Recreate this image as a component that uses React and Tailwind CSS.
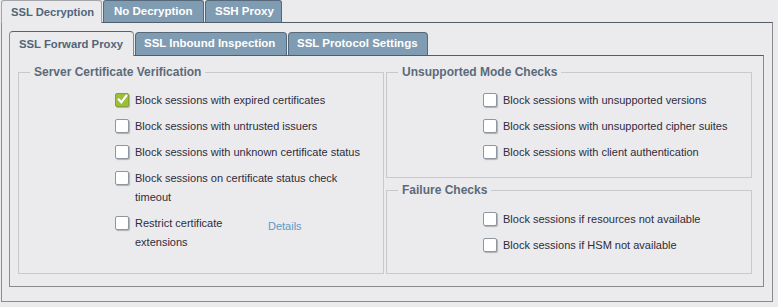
import React from "react";

function Box({ checked }) {
  return (
    <span
      className={
        "mt-[1.5px] flex h-[14px] w-[14px] shrink-0 items-center justify-center rounded-[2px] border shadow-[1px_1px_1px_rgba(0,0,0,0.25)] " +
        (checked ? "border-[#86a233] bg-[#9cbe3a]" : "border-[#8e969e] bg-white")
      }
    >
      {checked && (
        <svg width="11" height="11" viewBox="0 0 11 11">
          <path d="M1.8 5.6 L4.3 8.3 L9.3 1.8" fill="none" stroke="white" strokeWidth="2.2" strokeLinecap="square" />
        </svg>
      )}
    </span>
  );
}

function Row({ checked, children, w = "w-[235px]", extra }) {
  return (
    <div className="flex items-start">
      <Box checked={checked} />
      <span className={"ml-[6px] leading-[19px] " + w}>{children}</span>
      {extra}
    </div>
  );
}

function Group({ title, children, className = "" }) {
  return (
    <fieldset className={"border border-[#c9c9cb] " + className}>
      <legend className="ml-[11px] px-[4px] text-[12px] font-bold leading-[16px] text-[#5b6a79]">{title}</legend>
      <div className="flex flex-col gap-[7px] pl-[96px]">{children}</div>
    </fieldset>
  );
}

export default function App() {
  return (
    <div className="h-[307px] w-[778px] bg-[#ebebed] pl-px text-[11px] text-[#2e2b3c] [font-family:'Liberation_Sans',Arial,sans-serif]">
      {/* top tabs */}
      <div className="flex h-[22px] items-end gap-px">
        <div className="relative z-10 -mb-px flex h-[23px] w-[101px] items-center rounded-t-[3px] border border-b-0 border-[#a2a4a7] bg-[#ebebed] pl-[9px] text-[11.2px] font-bold text-[#50657a]">
          SSL Decryption
        </div>
        <div className="flex h-[22px] w-[101px] items-center rounded-t-[3px] border border-b-0 border-[#56697a] bg-[#7f9cb2] pl-[10px] text-[11.5px] font-bold text-white">
          No Decryption
        </div>
        <div className="flex h-[22px] w-[77px] items-center rounded-t-[3px] border border-b-0 border-[#56697a] bg-[#7f9cb2] pl-[9px] text-[11.5px] font-bold text-white">
          SSH Proxy
        </div>
      </div>
      {/* outer panel */}
      <div className="w-[772px] border border-[#8b8b8d] border-t-[#4f5e6c] pb-[14px] pl-[7px] pr-[8px] pt-[8px]">
        <div className="flex h-[24px] items-end gap-px">
          <div className="relative z-10 -mb-px flex h-[25px] w-[125px] items-center rounded-t-[4px] border border-b-0 border-[#8b8b8d] border-t-[#55636f] bg-[#ebebed] pl-[9px] text-[11.3px] font-bold text-[#50657a]">
            SSL Forward Proxy
          </div>
          <div className="flex h-[23px] w-[152px] items-center rounded-t-[4px] border border-b-0 border-[#56697a] bg-[#7f9cb2] pl-[8px] text-[11.5px] font-bold text-white">
            SSL Inbound Inspection
          </div>
          <div className="flex h-[23px] w-[140px] items-center rounded-t-[4px] border border-b-0 border-[#56697a] bg-[#7f9cb2] pl-[8px] text-[11.5px] font-bold text-white">
            SSL Protocol Settings
          </div>
        </div>
        <div className="w-[755px] border border-[#8b8b8d] border-t-[#4f5e6c] pb-[12px] pl-[8px] pr-[11px] pt-[8px]">
          <div className="grid grid-cols-[366px_366px] gap-[2px]">
            <Group title="Server Certificate Verification" className="pb-[21px] pt-[11px]">
              <Row checked>Block sessions with expired certificates</Row>
              <Row>Block sessions with untrusted issuers</Row>
              <Row>Block sessions with unknown certificate status</Row>
              <Row>Block sessions on certificate status check timeout</Row>
              <Row
                w="w-[120px]"
                extra={<span className="ml-[13px] mt-[3px] leading-[19px] text-[#5a9ac6]">Details</span>}
              >
                Restrict certificate extensions
              </Row>
            </Group>
            <div className="flex flex-col gap-[4px]">
              <Group title="Unsupported Mode Checks" className="pb-[15px] pt-[11px]">
                <Row w="w-[240px]">Block sessions with unsupported versions</Row>
                <Row w="w-[240px]">Block sessions with unsupported cipher suites</Row>
                <Row w="w-[240px]">Block sessions with client authentication</Row>
              </Group>
              <Group title="Failure Checks" className="flex-1 pt-[12px]">
                <Row w="w-[240px]">Block sessions if resources not available</Row>
                <Row w="w-[240px]">Block sessions if HSM not available</Row>
              </Group>
            </div>
          </div>
        </div>
      </div>
    </div>
  );
}
